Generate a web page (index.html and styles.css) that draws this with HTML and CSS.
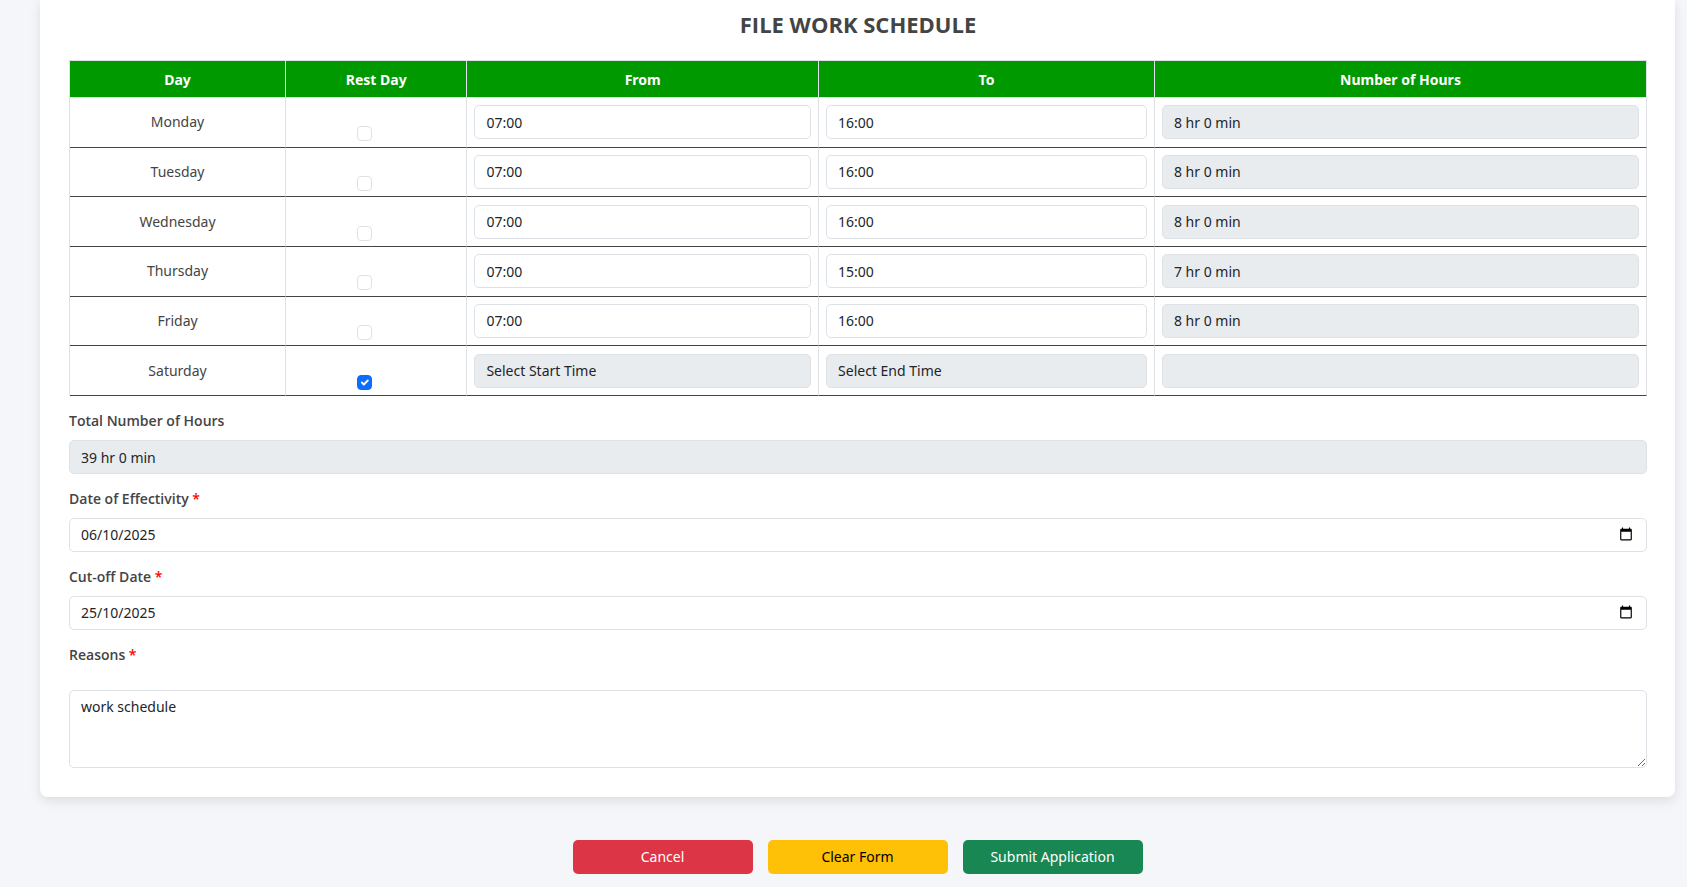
FILE: index.html
```html
<!DOCTYPE html>
<html lang="en">
<head>
<meta charset="utf-8">
<title>File Work Schedule</title>
<link rel="stylesheet" href="styles.css">
</head>
<body>
<form class="page">
  <section class="card">
    <h1 class="card-title">FILE WORK SCHEDULE</h1>
    <table class="schedule">
      <colgroup>
        <col class="col-day"><col class="col-rest"><col class="col-from"><col class="col-to"><col class="col-hours">
      </colgroup>
      <thead>
        <tr><th>Day</th><th>Rest Day</th><th>From</th><th>To</th><th>Number of Hours</th></tr>
      </thead>
      <tbody>
        <tr>
          <td>Monday</td>
          <td class="rest"><input class="check" type="checkbox" aria-label="Monday rest day"></td>
          <td><input class="control" type="text" value="07:00" aria-label="Monday from"></td>
          <td><input class="control" type="text" value="16:00" aria-label="Monday to"></td>
          <td><input class="control" type="text" value="8 hr 0 min" aria-label="Monday hours" disabled></td>
        </tr>
        <tr>
          <td>Tuesday</td>
          <td class="rest"><input class="check" type="checkbox" aria-label="Tuesday rest day"></td>
          <td><input class="control" type="text" value="07:00" aria-label="Tuesday from"></td>
          <td><input class="control" type="text" value="16:00" aria-label="Tuesday to"></td>
          <td><input class="control" type="text" value="8 hr 0 min" aria-label="Tuesday hours" disabled></td>
        </tr>
        <tr>
          <td>Wednesday</td>
          <td class="rest"><input class="check" type="checkbox" aria-label="Wednesday rest day"></td>
          <td><input class="control" type="text" value="07:00" aria-label="Wednesday from"></td>
          <td><input class="control" type="text" value="16:00" aria-label="Wednesday to"></td>
          <td><input class="control" type="text" value="8 hr 0 min" aria-label="Wednesday hours" disabled></td>
        </tr>
        <tr>
          <td>Thursday</td>
          <td class="rest"><input class="check" type="checkbox" aria-label="Thursday rest day"></td>
          <td><input class="control" type="text" value="07:00" aria-label="Thursday from"></td>
          <td><input class="control" type="text" value="15:00" aria-label="Thursday to"></td>
          <td><input class="control" type="text" value="7 hr 0 min" aria-label="Thursday hours" disabled></td>
        </tr>
        <tr>
          <td>Friday</td>
          <td class="rest"><input class="check" type="checkbox" aria-label="Friday rest day"></td>
          <td><input class="control" type="text" value="07:00" aria-label="Friday from"></td>
          <td><input class="control" type="text" value="16:00" aria-label="Friday to"></td>
          <td><input class="control" type="text" value="8 hr 0 min" aria-label="Friday hours" disabled></td>
        </tr>
        <tr>
          <td>Saturday</td>
          <td class="rest"><input class="check" type="checkbox" aria-label="Saturday rest day" checked></td>
          <td><input class="control" type="text" value="Select Start Time" aria-label="Saturday from" disabled></td>
          <td><input class="control" type="text" value="Select End Time" aria-label="Saturday to" disabled></td>
          <td><input class="control" type="text" aria-label="Saturday hours" disabled></td>
        </tr>
      </tbody>
    </table>

    <div class="field">
      <label class="label" for="total">Total Number of Hours</label>
      <input class="control" id="total" type="text" value="39 hr 0 min" disabled>
    </div>
    <div class="field">
      <label class="label" for="effectivity">Date of Effectivity <span class="required">*</span></label>
      <div class="control date">
        <input class="date-input" id="effectivity" type="text" value="06/10/2025">
        <button class="date-button" type="button" aria-label="Choose date of effectivity">
          <svg viewBox="0 0 24 24" width="14" height="14"><path d="M20 3h-1V1h-2v2H7V1H5v2H4c-1.100 0-2 .9-2 2v16c0 1.100.9 2 2 2h16c1.100 0 2-.9 2-2V5c0-1.100-.9-2-2-2zm0 18H4V8h16v13z"/></svg>
        </button>
      </div>
    </div>
    <div class="field">
      <label class="label" for="cutoff">Cut-off Date <span class="required">*</span></label>
      <div class="control date">
        <input class="date-input" id="cutoff" type="text" value="25/10/2025">
        <button class="date-button" type="button" aria-label="Choose cut-off date">
          <svg viewBox="0 0 24 24" width="14" height="14"><path d="M20 3h-1V1h-2v2H7V1H5v2H4c-1.100 0-2 .9-2 2v16c0 1.100.9 2 2 2h16c1.100 0 2-.9 2-2V5c0-1.100-.9-2-2-2zm0 18H4V8h16v13z"/></svg>
        </button>
      </div>
    </div>
    <div class="field field-reasons">
      <label class="label" for="reasons">Reasons <span class="required">*</span></label>
      <textarea class="control" id="reasons" rows="3">work schedule</textarea>
    </div>
  </section>

  <div class="actions">
    <button class="button cancel" type="button">Cancel</button>
    <button class="button clear" type="reset">Clear Form</button>
    <button class="button submit" type="submit">Submit Application</button>
  </div>
</form>
</body>
</html>
```

FILE: styles.css
```css
* {
  box-sizing: border-box;
}

body {
  margin: 0;
  background: #f4f6fa;
  color: #444;
  font: 14px/22px "Noto Sans", "Open Sans", sans-serif;
}

.page {
  padding: 0 12px 14px 40px;
}

.card {
  padding: 12px 28px 29px 29px;
  background: #fff;
  border-radius: 0 0 8px 8px;
  box-shadow: 0 4px 12px rgba(0, 0, 0, 0.1);
}

.card-title {
  margin: 0 0 24px;
  font: 700 22px/24px "Open Sans", sans-serif;
  text-align: center;
}

.schedule {
  width: 100%;
  height: 336px;
  table-layout: fixed;
  border-collapse: separate;
  border-spacing: 0;
  border-left: 1px solid #dee2e6;
  text-align: center;
}

.col-day { width: 13.7%; }
.col-rest { width: 11.5%; }
.col-from { width: 22.3%; }
.col-to { width: 21.3%; }
.col-hours { width: 31.2%; }

.schedule th {
  height: 38px;
  padding: 8px 7px 6px;
  border: solid #dee2e6;
  border-width: 1px 1px 1px 0;
  background: #090;
  background-clip: padding-box;
  color: #fff;
  font-weight: 700;
}

.schedule td {
  padding: 7px;
  border-right: 1px solid #dee2e6;
  border-bottom: 1px solid #444;
  vertical-align: middle;
}

.schedule .rest {
  padding: 28px 7px 5px 71px;
}

.control {
  display: block;
  width: 100%;
  height: 34px;
  padding: 5px 11px;
  border: 1px solid #dee2e6;
  border-radius: 5px;
  background: #fff;
  color: #212529;
  font: inherit;
}

.control:disabled {
  background: #e9ecef;
}

.check {
  appearance: none;
  display: block;
  width: 15px;
  height: 15px;
  margin: 0;
  border: 1px solid #dee2e6;
  border-radius: 4px;
  background: #fff;
}

.check:checked {
  border-color: #0d6efd;
  background: #0d6efd url("data:image/svg+xml,%3Csvg xmlns='http://www.w3.org/2000/svg' viewBox='0 0 20 20'%3E%3Cpath fill='none' stroke='%23fff' stroke-linecap='round' stroke-linejoin='round' stroke-width='3' d='m6 10 3 3 6-6'/%3E%3C/svg%3E") center / contain no-repeat;
}

.field {
  margin-top: 14px;
}

.label {
  display: block;
  margin-bottom: 8px;
  font-family: "Open Sans", sans-serif;
  font-weight: 600;
}

.required {
  color: #f00;
}

.date {
  display: flex;
  align-items: center;
}

.date-input {
  flex: 1;
  min-width: 0;
  padding: 0;
  border: 0;
  background: none;
  color: inherit;
  font: inherit;
}

.date-button {
  display: flex;
  padding: 0 2px 3px;
  border: 0;
  background: none;
}

.field-reasons .label {
  margin-bottom: 24px;
}

textarea.control {
  height: auto;
  min-height: 77px;
}

.actions {
  display: flex;
  justify-content: center;
  gap: 15px;
  margin-top: 43px;
}

.button {
  width: 180px;
  height: 34px;
  padding: 0 12px;
  border: 0;
  border-radius: 5px;
  color: #fff;
  font: inherit;
}

.cancel { background: #dc3545; }
.clear { background: #ffc107; color: #000; }
.submit { background: #198754; }
```
